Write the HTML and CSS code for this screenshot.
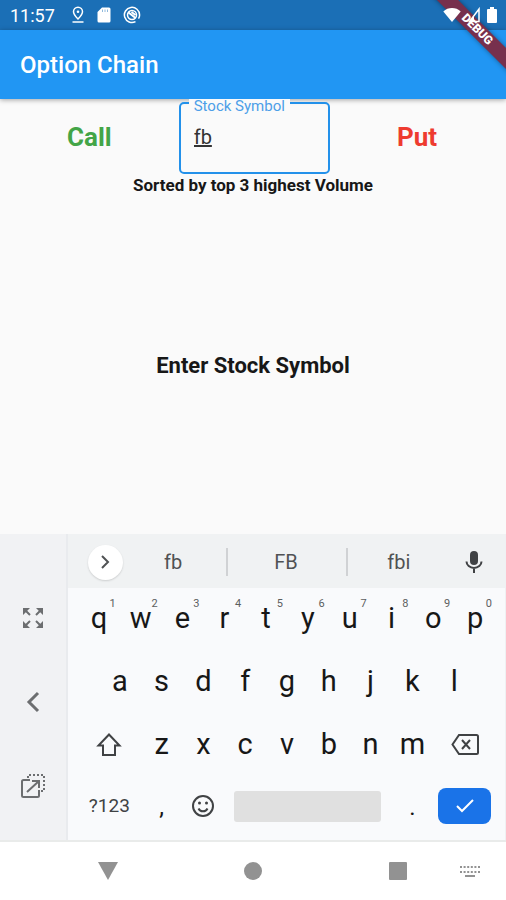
FILE: index.html
```html
<!DOCTYPE html>
<html lang="en">
<head>
<meta charset="utf-8">
<meta name="viewport" content="width=device-width, initial-scale=1">
<title>Option Chain</title>
<link rel="stylesheet" href="styles.css">
</head>
<body>
<div class="screen">
  <div class="status-bar">
    <span class="clock">11:57</span>
    <div class="status-group">
      <svg width="14" height="18" viewBox="0 0 14 18" fill="none" stroke="currentColor" stroke-width="1.5"><path d="M7 13C4.200 10.200 2.500 8 2.500 5.800a4.500 4.500 0 0 1 9 0C11.500 8 9.800 10.200 7 13Z"/><circle cx="7" cy="5.800" r="1.300" fill="currentColor" stroke="none"/><path d="M1.500 16h11"/></svg>
      <svg width="14" height="18" viewBox="0 0 14 18"><path fill="currentColor" d="M5 1.500h7a1.500 1.500 0 0 1 1.500 1.500v12a1.500 1.500 0 0 1-1.500 1.500H2A1.500 1.500 0 0 1 .500 15V6Z"/><path stroke="#8fb9dc" d="M5.500 3.500v2.500M8 3.500v2.500M10.500 3.500v2.500"/></svg>
      <svg width="18" height="18" viewBox="0 0 18 18" fill="none" stroke="currentColor"><path stroke-width="1.500" d="M12.500 15.700A7.600 7.600 0 1 1 16.600 9c0 1.500-.300 2.500-1.100 3.600"/><circle cx="9" cy="9" r="4.500" stroke-width="1.500"/><path stroke-width="2" d="m5.500 6.500 7 5.500M8.500 6l4 3"/></svg>
    </div>
    <div class="status-group status-right">
      <svg width="18" height="16" viewBox="0 0 18 16"><path fill="currentColor" d="M9 15 .300 4.400C5-.200 13-.200 17.700 4.400Z"/></svg>
      <svg width="12" height="16" viewBox="0 0 12 16"><path fill="none" stroke="currentColor" stroke-width="1.500" d="M11 2v12.500H1.500Z"/><path fill="currentColor" d="M1 15l5-6.500V15Z"/></svg>
      <svg width="10" height="16" viewBox="0 0 10 16"><path fill="currentColor" d="M3 0h4v2h2a1 1 0 0 1 1 1v12a1 1 0 0 1-1 1H1a1 1 0 0 1-1-1V3a1 1 0 0 1 1-1h2Z"/></svg>
    </div>
  </div>
  <header class="app-bar"><h1>Option Chain</h1></header>
  <div class="ribbon"><span>DEBUG</span></div>

  <main class="content">
    <div class="query">
      <span class="side call">Call</span>
      <div class="field">
        <label for="symbol">Stock Symbol</label>
        <input id="symbol" type="text" value="fb" spellcheck="false" autocomplete="off">
      </div>
      <span class="side put">Put</span>
    </div>
    <p class="sorted">Sorted by top 3 highest Volume</p>
    <p class="prompt">Enter Stock Symbol</p>
  </main>

  <section class="keyboard" aria-label="Keyboard">
    <div class="tools">
      <button aria-label="Resize"><svg width="22" height="22" viewBox="0 0 22 22" fill="none" stroke="currentColor" stroke-width="2"><path d="m3 3 5 5M19 3l-5 5M3 19l5-5M19 19l-5-5"/><path fill="currentColor" stroke="none" d="M1 1h7L1 8ZM21 1h-7l7 7ZM1 21h7l-7-7ZM21 21h-7l7-7Z"/></svg></button>
      <button aria-label="Move left"><svg width="14" height="22" viewBox="0 0 14 22" fill="none" stroke="currentColor" stroke-width="3"><path d="M12 2 3 11l9 9"/></svg></button>
      <button aria-label="Float"><svg width="26" height="26" viewBox="0 0 26 26" fill="none" stroke="currentColor" stroke-width="2"><path d="M10 7H3.500A1.500 1.500 0 0 0 2 8.500v14A1.500 1.500 0 0 0 3.500 24h14a1.500 1.500 0 0 0 1.500-1.500V17M7 19 19 8M12 8h7v7"/><path stroke-dasharray="2 2" d="M8 5V2h16v16h-4"/></svg></button>
    </div>
    <div class="board">
      <div class="suggestions">
        <div class="expand-cell"><button class="expand" aria-label="More"><svg width="12" height="16" viewBox="0 0 12 16" fill="none" stroke="currentColor" stroke-width="2"><path d="m3 2 6 6-6 6"/></svg></button></div>
        <button>fb</button>
        <button class="split">FB</button>
        <button class="split">fbi</button>
        <button aria-label="Voice input" class="mic"><svg width="18" height="24" viewBox="0 0 18 24"><rect x="5" y="1" width="8" height="14" rx="4" fill="currentColor"/><path fill="none" stroke="currentColor" stroke-width="2" d="M1.500 11.500a7.500 6.500 0 0 0 15 0M9 18v5"/></svg></button>
      </div>
      <div class="keys">
        <button>q<sup>1</sup></button><button>w<sup>2</sup></button><button>e<sup>3</sup></button><button>r<sup>4</sup></button><button>t<sup>5</sup></button><button>y<sup>6</sup></button><button>u<sup>7</sup></button><button>i<sup>8</sup></button><button>o<sup>9</sup></button><button>p<sup>0</sup></button>
        <button class="indent">a</button><button>s</button><button>d</button><button>f</button><button>g</button><button>h</button><button>j</button><button>k</button><button>l</button>
        <button class="wide first" aria-label="Shift"><svg width="26" height="26" viewBox="0 0 26 26" fill="none" stroke="currentColor" stroke-width="2"><path d="M13 3.500 2.500 14.500H7V24h12v-9.500h4.500Z"/></svg></button><button>z</button><button>x</button><button>c</button><button>v</button><button>b</button><button>n</button><button>m</button>
        <button class="wide" aria-label="Backspace"><svg width="28" height="24" viewBox="0 0 28 24" fill="none" stroke="currentColor" stroke-width="2"><path d="M8 3h17.500a1.500 1.500 0 0 1 1.500 1.500v16a1.500 1.500 0 0 1-1.500 1.500H8l-6.500-9.500Z"/><path d="m11 8 8 9M19 8l-8 9"/></svg></button>
        <button class="wide first mode">?123</button><button class="mark">,</button>
        <button class="emoji" aria-label="Emoji"><svg width="24" height="24" viewBox="0 0 24 24" fill="none" stroke="currentColor" stroke-width="2"><circle cx="12" cy="12" r="10"/><path d="M7.500 14.500a5 5 0 0 0 9 0" stroke-width="2"/><circle cx="8.500" cy="9" r="1.500" fill="currentColor" stroke="none"/><circle cx="15.500" cy="9" r="1.500" fill="currentColor" stroke="none"/></svg></button>
        <button class="space" aria-label="Space"></button><button class="mark">.</button>
        <button class="wide enter" aria-label="Done"><svg width="22" height="18" viewBox="0 0 22 18" fill="none" stroke="currentColor" stroke-width="2"><path d="m3 9 5 5L19 3"/></svg></button>
      </div>
    </div>
  </section>

  <nav class="nav-bar" aria-label="System">
    <button class="back" aria-label="Back"><svg width="20" height="18" viewBox="0 0 20 18"><path fill="currentColor" d="M0 0h20L10 18Z"/></svg></button>
    <button class="home" aria-label="Home"><svg width="18" height="18" viewBox="0 0 18 18"><circle cx="9" cy="9" r="9" fill="currentColor"/></svg></button>
    <button class="recent" aria-label="Recent apps"><svg width="18" height="18" viewBox="0 0 18 18"><rect width="18" height="18" rx="1" fill="currentColor"/></svg></button>
    <button class="ime" aria-label="Switch keyboard"><svg width="20" height="12" viewBox="0 0 20 12" fill="none" stroke="currentColor" stroke-width="2"><path stroke-dasharray="2 1.600" d="M0 2h20M0 7h20"/><path d="M5 11h10"/></svg></button>
  </nav>
</div>
</body>
</html>
```
FILE: styles.css
```css
* {
  box-sizing: border-box;
}

body {
  margin: 0;
  font-family: Roboto, "Liberation Sans", sans-serif;
  background: #fafafa;
  color: #171717;
}

h1,
p {
  margin: 0;
}

svg {
  display: block;
}

button {
  padding: 0;
  border: 0;
  background: none;
  font: inherit;
  color: inherit;
  display: flex;
  align-items: center;
  justify-content: center;
}

.screen {
  position: relative;
  min-height: 100vh;
  display: flex;
  flex-direction: column;
}

.status-bar {
  height: 30px;
  padding: 0 9px 0 10px;
  display: flex;
  align-items: center;
  gap: 16px;
  background: #1b6fb6;
  color: #fff;
}

.clock {
  font-size: 18px;
}

.status-group {
  display: flex;
  align-items: center;
  gap: 12px;
}

.status-right {
  position: relative;
  z-index: 3;
  margin-left: auto;
  gap: 7px;
}

.app-bar {
  position: relative;
  height: 69px;
  padding: 0 20px;
  display: flex;
  align-items: center;
  background: #2196f3;
  color: #fff;
  box-shadow: 0 1px 5px rgba(0, 0, 0, 0.35);
}

.app-bar h1 {
  font-size: 24px;
  font-weight: 500;
}

.ribbon {
  position: absolute;
  z-index: 2;
  top: 0;
  right: 0;
  width: 76px;
  height: 76px;
  overflow: hidden;
}

.ribbon span {
  position: absolute;
  top: 22px;
  left: -13px;
  width: 120px;
  transform: rotate(45deg);
  background: #77304d;
  box-shadow: 0 0 5px rgba(0, 0, 0, 0.4);
  color: #fff;
  font-size: 12px;
  font-weight: 900;
  line-height: 15px;
  text-align: center;
}

.content {
  flex: 1;
  display: flex;
  flex-direction: column;
}

.query {
  padding-right: 2px;
  display: flex;
  align-items: center;
  justify-content: space-evenly;
}

.side {
  font-size: 26px;
  font-weight: 700;
}

.call {
  color: #43a547;
}

.put {
  color: #ee3b2f;
}

.field {
  position: relative;
  width: 30%;
  padding-top: 3px;
}

.field input {
  display: block;
  width: 100%;
  height: 72px;
  padding: 0 13px 2px;
  border: 2px solid #2391ea;
  border-radius: 5px;
  outline: 0;
  background: transparent;
  font: 20px Roboto, "Liberation Sans", sans-serif;
  color: #333;
  text-decoration: underline;
}

.field label {
  position: absolute;
  top: 0;
  left: 10px;
  padding: 0 5px;
  background: #fafafa;
  color: #4d9fe8;
  font-size: 15px;
  line-height: 14px;
  white-space: nowrap;
}

.sorted {
  font-size: 17px;
  font-weight: 700;
  line-height: 22px;
  text-align: center;
}

.prompt {
  flex: 1;
  display: flex;
  align-items: center;
  justify-content: center;
  font-size: 22px;
  font-weight: 700;
}

.keyboard {
  display: flex;
  background: #f9fafc;
  border-right: 1px solid #eff1f3;
}

.tools {
  width: 68px;
  padding: 42px 0 12px;
  display: flex;
  flex-direction: column;
  background: #f1f2f4;
  border-right: 2px solid #e9ebee;
  color: #6c6e70;
}

.tools button {
  flex: 1;
}

.board {
  flex: 1;
}

.suggestions {
  height: 54px;
  padding: 2px 9px 0 10px;
  display: grid;
  grid-template-columns: 42px 8fr 9fr 8fr 44px;
  background: #f0f2f3;
  color: #505254;
  font-size: 20px;
}

.expand-cell {
  display: flex;
  align-items: center;
  justify-content: center;
  padding-left: 12px;
}

.expand {
  flex: none;
  width: 35px;
  height: 35px;
  border-radius: 50%;
  background: #fff;
  box-shadow: 0 1px 2px rgba(0, 0, 0, 0.15);
}

.split {
  background: linear-gradient(#d0d2d4, #d0d2d4) left center / 2px 28px no-repeat;
}

.mic {
  color: #404244;
}

.keys {
  padding: 0 9px 0 10px;
  display: grid;
  grid-template-columns: repeat(20, 1fr);
  grid-auto-rows: 63px;
  font-size: 29px;
}

.keys button {
  position: relative;
  grid-column: span 2;
  padding-bottom: 4px;
}

.keys sup {
  position: absolute;
  top: 9px;
  right: 4px;
  font-size: 11px;
  line-height: 14px;
  color: #5c5e60;
}

.keys .indent {
  grid-column: 2 / span 2;
}

.keys .wide {
  grid-column: span 3;
  color: #404244;
}

.keys .first {
  grid-column: 1 / span 3;
}

.keys .mode {
  padding-bottom: 6px;
  font-size: 19px;
}

.keys .mark {
  font-size: 24px;
}

.keys .emoji {
  padding-bottom: 6px;
  color: #404244;
}

.keys .space {
  grid-column: span 8;
  height: 31px;
  margin: 14px 10px;
  border-radius: 3px;
  background: #e0e0e0;
}

.keys .enter {
  height: 36px;
  margin: 11px 5px;
  padding: 0;
  border-radius: 8px;
  background: #1a73e8;
  color: #fff;
}

.nav-bar {
  height: 60px;
  display: grid;
  grid-template-columns: repeat(7, 1fr);
  border-top: 2px solid #e9ebea;
  background: #fff;
  color: #929292;
}

.back {
  grid-column: 2;
}

.home {
  grid-column: 4;
}

.recent {
  grid-column: 6;
}
```
